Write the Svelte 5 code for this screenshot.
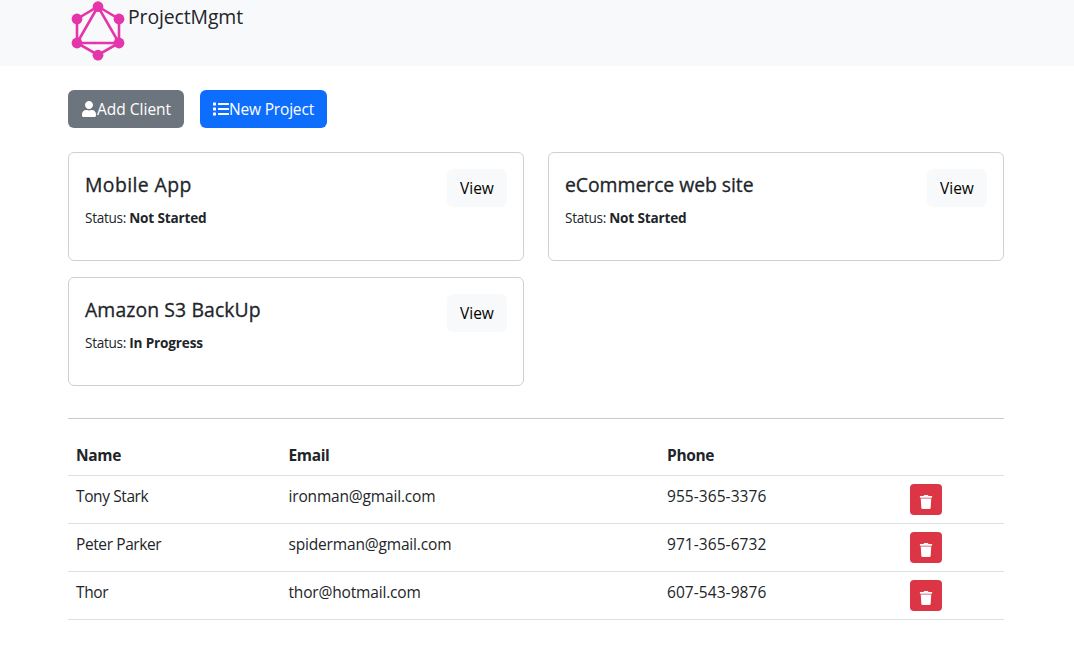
<script>
  const projects = [
    { name: 'Mobile App', status: 'Not Started', track: '0.4px' },
    { name: 'eCommerce web site', status: 'Not Started', track: '-0.05px' },
    { name: 'Amazon S3 BackUp', status: 'In Progress', track: '0.1px' }
  ];
  const clients = [
    { name: 'Tony Stark', email: 'ironman@gmail.com', phone: '955-365-3376' },
    { name: 'Peter Parker', email: 'spiderman@gmail.com', phone: '971-365-6732' },
    { name: 'Thor', email: 'thor@hotmail.com', phone: '607-543-9876' }
  ];
</script>

<nav>
  <div class="container brand">
    <svg class="logo" width="60" height="62" viewBox="0 0 60 62" fill="#e535ab" stroke="#e535ab">
      <path d="M30 6.500 51 19v24L30 55 9 43V19zM30 6.500 9 43h42z" fill="none" stroke-width="2.600" />
      <g stroke="none">
        <circle cx="30" cy="6.700" r="5.400" />
        <circle cx="51" cy="19" r="5.400" />
        <circle cx="51" cy="43" r="5.400" />
        <circle cx="30" cy="55.200" r="5.400" />
        <circle cx="9" cy="43" r="5.400" />
        <circle cx="9" cy="19" r="5.400" />
      </g>
    </svg>
    <span class="title">ProjectMgmt</span>
  </div>
</nav>

<main class="container">
  <div class="actions">
    <button class="btn add">
      <svg width="16" height="16" viewBox="0 0 448 512" fill="currentColor"><path d="M224 256c70.700 0 128-57.300 128-128S294.700 0 224 0 96 57.300 96 128s57.300 128 128 128zm89.600 32h-16.700c-22.200 10.200-46.900 16-72.900 16s-50.600-5.800-72.900-16h-16.700C60.200 288 0 348.200 0 422.400V464c0 26.500 21.500 48 48 48h352c26.500 0 48-21.500 48-48v-41.600c0-74.200-60.200-134.400-134.400-134.400z" /></svg>
      <span>Add Client</span>
    </button>
    <button class="btn new">
      <svg width="16" height="16" viewBox="0 0 512 512" fill="currentColor"><path d="M80 368H16a16 16 0 0 0-16 16v64a16 16 0 0 0 16 16h64a16 16 0 0 0 16-16v-64a16 16 0 0 0-16-16zm0-320H16A16 16 0 0 0 0 64v64a16 16 0 0 0 16 16h64a16 16 0 0 0 16-16V64a16 16 0 0 0-16-16zm0 160H16a16 16 0 0 0-16 16v64a16 16 0 0 0 16 16h64a16 16 0 0 0 16-16v-64a16 16 0 0 0-16-16zm416 176H176a16 16 0 0 0-16 16v32a16 16 0 0 0 16 16h320a16 16 0 0 0 16-16v-32a16 16 0 0 0-16-16zm0-320H176a16 16 0 0 0-16 16v32a16 16 0 0 0 16 16h320a16 16 0 0 0 16-16V80a16 16 0 0 0-16-16zm0 160H176a16 16 0 0 0-16 16v32a16 16 0 0 0 16 16h320a16 16 0 0 0 16-16v-32a16 16 0 0 0-16-16z" /></svg>
      <span>New Project</span>
    </button>
  </div>

  <div class="grid">
    {#each projects as p}
      <article class="card">
        <div>
          <h5 style:letter-spacing={p.track}>{p.name}</h5>
          <p>Status: <strong>{p.status}</strong></p>
        </div>
        <button class="btn view">View</button>
      </article>
    {/each}
  </div>

  <hr />

  <table>
    <colgroup><col class="c1" /><col class="c2" /><col class="c3" /><col /></colgroup>
    <thead>
      <tr><th>Name</th><th>Email</th><th>Phone</th><th></th></tr>
    </thead>
    <tbody>
      {#each clients as c}
        <tr>
          <td class="name">{c.name}</td>
          <td class="email">{c.email}</td>
          <td class="phone">{c.phone}</td>
          <td>
            <button class="del" aria-label="Delete">
              <svg width="14" height="14" viewBox="0 0 448 512" fill="currentColor"><path d="M432 32H312l-9.400-18.700A24 24 0 0 0 281.100 0H166.800a23.720 23.720 0 0 0-21.400 13.300L136 32H16A16 16 0 0 0 0 48v32a16 16 0 0 0 16 16h416a16 16 0 0 0 16-16V48a16 16 0 0 0-16-16zM53.200 467a48 48 0 0 0 47.900 45h245.800a48 48 0 0 0 47.900-45L416 128H32z" /></svg>
            </button>
          </td>
        </tr>
      {/each}
    </tbody>
  </table>
</main>

<style>
  :global(body) {
    margin: 0;
    background: #fff;
    color: #212529;
    font: 400 15.5px/24px 'Segoe UI', 'Open Sans', 'Noto Sans', sans-serif;
  }
  :global(*) { box-sizing: border-box; }
  .container { width: 936px; margin: 0 auto; position: relative; left: -1px; }
  nav { background: #f8f9fa; height: 66px; }
  .brand { display: flex; align-items: flex-start; }
  .logo { display: block; }
  .title { font-size: 19.400px; line-height: 30px; padding-top: 2px; letter-spacing: -0.1px; }
  .actions { display: flex; gap: 16px; padding-top: 24px; }
  button { font-family: inherit; border: 0; margin: 0; }
  .btn {
    display: flex; align-items: center; height: 38px; padding: 0 13px;
    border-radius: 6px; font-size: 15.500px; line-height: 24px; color: #fff;
    white-space: nowrap;
  }
  .btn svg { flex: none; }
  .add { background: #6c757d; width: 116px; }
  .new { background: #0d6efd; width: 127px; letter-spacing: -0.180px; }
  .grid { display: grid; grid-template-columns: 456px 456px; gap: 16px 24px; padding-top: 24px; }
  .card {
    display: flex; justify-content: space-between; align-items: flex-start;
    height: 109px; padding: 16px; border: 1px solid #d0d0d1; border-radius: 6px;
  }
  h5 { margin: 4px 0 10px; font-size: 19.400px; font-weight: 500; line-height: 24px; -webkit-text-stroke: 0.300px #212529; }
  p { margin: 0; font-size: 13.600px; line-height: 21px; letter-spacing: -0.300px; }
  p strong { letter-spacing: -0.170px; }
  .view { background: #f8f9fa; color: #000; width: 60px; }
  hr { border: 0; height: 1px; background: #c8c9ca; margin: 32px 0 16px; }
  table { width: 936px; table-layout: fixed; border-collapse: separate; border-spacing: 0; }
  .c1 { width: 212.500px; }
  .c2 { width: 378.500px; }
  .c3 { width: 243px; }
  th, td { padding: 8px; text-align: left; vertical-align: top; border-bottom: 1px solid #dee2e6; }
  th { font-weight: 700; height: 41px; letter-spacing: -0.350px; }
  td { height: 48px; line-height: 25px; padding-bottom: 0; }
  .name { letter-spacing: -0.400px; }
  .email { letter-spacing: -0.170px; }
  .phone { letter-spacing: 0.060px; }
  .del {
    display: flex; justify-content: center; width: 32px; height: 31px; padding: 11px 0 0;
    background: #dc3545; color: #fff; border-radius: 4px;
  }
</style>
